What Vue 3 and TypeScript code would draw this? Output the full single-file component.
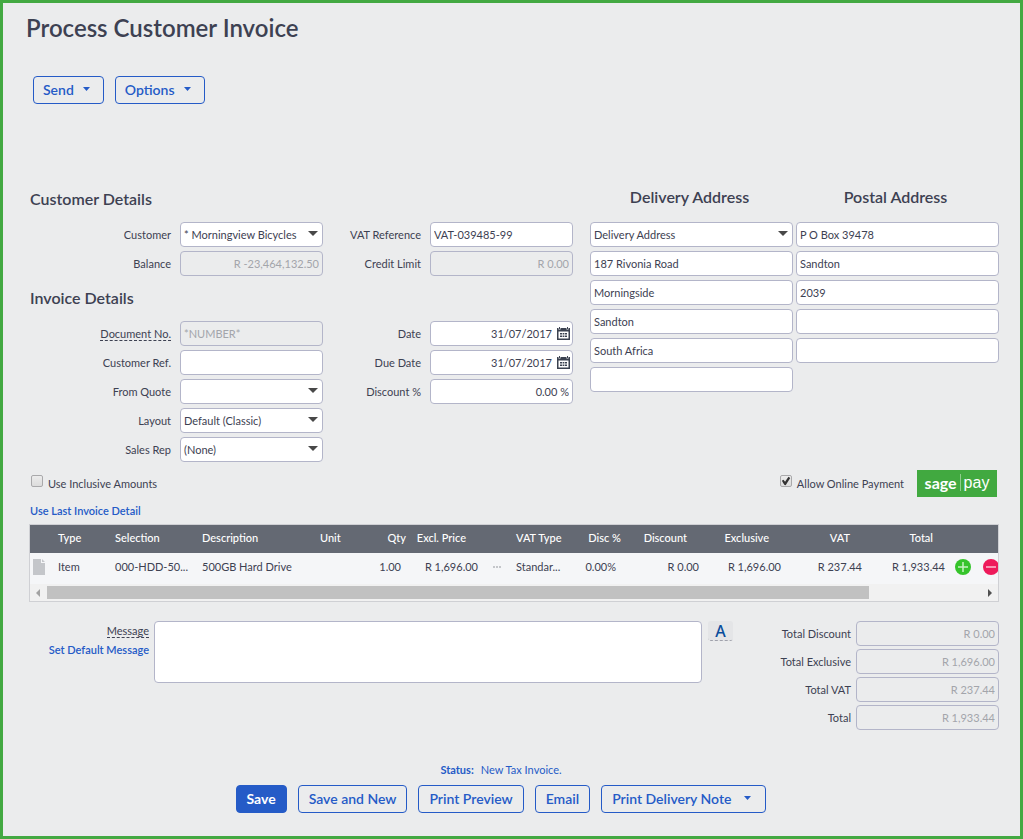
<script setup lang="ts">
import { ref } from 'vue'

interface Field {
  id: string
  label: string
  value: string
  kind?: 'text' | 'select' | 'date'
  readonly?: boolean
  right?: boolean
  hint?: boolean
}

const customerLeft: Field[] = [
  { id: 'customer', label: 'Customer', value: '* Morningview Bicycles', kind: 'select' },
  { id: 'balance', label: 'Balance', value: 'R -23,464,132.50', readonly: true, right: true },
]
const customerRight: Field[] = [
  { id: 'vatref', label: 'VAT Reference', value: 'VAT-039485-99' },
  { id: 'credit', label: 'Credit Limit', value: 'R 0.00', readonly: true, right: true },
]
const invoiceLeft: Field[] = [
  { id: 'docno', label: 'Document No.', value: '*NUMBER*', readonly: true, hint: true },
  { id: 'custref', label: 'Customer Ref.', value: '' },
  { id: 'quote', label: 'From Quote', value: '', kind: 'select' },
  { id: 'layout', label: 'Layout', value: 'Default (Classic)', kind: 'select' },
  { id: 'rep', label: 'Sales Rep', value: '(None)', kind: 'select' },
]
const invoiceRight: Field[] = [
  { id: 'date', label: 'Date', value: '31/07/2017', kind: 'date', right: true },
  { id: 'due', label: 'Due Date', value: '31/07/2017', kind: 'date', right: true },
  { id: 'discount', label: 'Discount %', value: '0.00 %', right: true },
]
const sections = [
  { title: 'Customer Details', columns: [customerLeft, customerRight] },
  { title: 'Invoice Details', columns: [invoiceLeft, invoiceRight] },
]
const deliveryLines = ['187 Rivonia Road', 'Morningside', 'Sandton', 'South Africa', '']
const postalLines = ['P O Box 39478', 'Sandton', '2039', '', '']
const totals: Field[] = [
  { id: 'tdisc', label: 'Total Discount', value: 'R 0.00' },
  { id: 'texcl', label: 'Total Exclusive', value: 'R 1,696.00' },
  { id: 'tvat', label: 'Total VAT', value: 'R 237.44' },
  { id: 'total', label: 'Total', value: 'R 1,933.44' },
]
const inclusive = ref(false)
const online = ref(true)
const message = ref('')
</script>

<template>
  <main class="page">
    <h1>Process Customer Invoice</h1>
    <div class="toolbar">
      <button type="button" class="btn">Send <svg class="caret" viewBox="0 0 7 4"><path d="M0 0h7L3.500 4z" /></svg></button>
      <button type="button" class="btn">Options <svg class="caret" viewBox="0 0 7 4"><path d="M0 0h7L3.500 4z" /></svg></button>
    </div>

    <div class="top">
      <div class="details">
        <section v-for="s in sections" :key="s.title">
          <h2>{{ s.title }}</h2>
          <div class="field-cols">
            <div v-for="(col, i) in s.columns" :key="i" class="stack">
              <div v-for="f in col" :key="f.id" class="field">
                <label :for="f.id"><span :class="{ hint: f.hint }">{{ f.label }}</span></label>
                <div class="control">
                  <template v-if="f.kind === 'select'">
                    <select :id="f.id" class="box"><option>{{ f.value }}</option></select>
                    <svg class="arrow" viewBox="0 0 10 5"><path d="M0 0h10L5 5z" /></svg>
                  </template>
                  <input v-else :id="f.id" type="text" class="box" :class="{ right: f.right, dated: f.kind === 'date' }" :value="f.value" :disabled="f.readonly" />
                  <button v-if="f.kind === 'date'" type="button" class="cal" :aria-label="'Pick ' + f.label">
                    <svg viewBox="0 0 13 13">
                      <path fill="#3b4250" d="M0 1h1.500v1.500h2V1h6v1.500h2V1H13v12H0zM1.500 4.500v7h10v-7z" fill-rule="evenodd" />
                      <path fill="#3b4250" d="M2 0h1v2H2zM10 0h1v2h-1zM3 6h2v1.500H3zM5.600 6h1.800v1.500H5.600zM8 6h2v1.500H8zM3 8.500h2V10H3zM5.600 8.500h1.800V10H5.600zM8 8.500h2V10H8z" />
                    </svg>
                  </button>
                </div>
              </div>
            </div>
          </div>
        </section>
      </div>

      <div class="addresses">
        <section>
          <h2>Delivery Address</h2>
          <div class="stack">
            <div class="select-wrap">
              <select class="box" aria-label="Delivery address"><option>Delivery Address</option></select>
              <svg class="arrow" viewBox="0 0 10 5"><path d="M0 0h10L5 5z" /></svg>
            </div>
            <input v-for="(l, i) in deliveryLines" :key="i" type="text" class="box" :value="l" :aria-label="'Delivery line ' + (i + 1)" />
          </div>
        </section>
        <section>
          <h2>Postal Address</h2>
          <div class="stack">
            <input v-for="(l, i) in postalLines" :key="i" type="text" class="box" :value="l" :aria-label="'Postal line ' + (i + 1)" />
          </div>
        </section>
      </div>
    </div>

    <div class="options">
      <label class="check"><input v-model="inclusive" type="checkbox" />Use Inclusive Amounts</label>
      <div class="online">
        <label class="check"><input v-model="online" type="checkbox" />Allow Online Payment</label>
        <div class="sage"><b>sage</b><i></i><span>pay</span></div>
      </div>
    </div>
    <a href="#" class="link last">Use Last Invoice Detail</a>

    <div class="grid">
      <table>
        <colgroup>
          <col class="w24" /><col class="w57" /><col class="w87" /><col /><col class="w50" /><col class="w44" /><col class="w72" /><col class="w30" /><col class="w65" /><col class="w60" /><col class="w66" /><col class="w82" /><col class="w81" /><col class="w83" /><col class="w28" /><col class="w21" />
        </colgroup>
        <thead>
          <tr>
            <th></th><th>Type</th><th>Selection</th><th>Description</th><th>Unit</th><th class="num qty">Qty</th>
            <th class="num">Excl. Price</th><th></th><th>VAT Type</th><th class="num">Disc %</th><th class="num">Discount</th>
            <th class="num">Exclusive</th><th class="num">VAT</th><th class="num">Total</th><th></th><th></th>
          </tr>
        </thead>
        <tbody>
          <tr>
            <td class="icon"><svg class="doc" viewBox="0 0 12 16"><path d="M0 0h8v4h4v12H0zM9 0l3 3H9z" fill="#c4c6ca" /></svg></td>
            <td>Item</td><td>000-HDD-50...</td><td>500GB Hard Drive</td><td></td><td class="num qty">1.00</td>
            <td class="num">R 1,696.00</td>
            <td class="icon"><svg class="dots" viewBox="0 0 8 2"><path d="M0 0h2v2H0zM3 0h2v2H3zM6 0h2v2H6z" fill="#c4c6ca" /></svg></td>
            <td>Standar...</td><td class="num disc">0.00%</td><td class="num">R 0.00</td><td class="num">R 1,696.00</td>
            <td class="num">R 237.44</td><td class="num">R 1,933.44</td>
            <td class="icon"><button type="button" class="round" aria-label="Add line"><svg viewBox="0 0 16 16"><circle cx="8" cy="8" r="8" fill="#35c42b" /><path d="M8 3v10M3 8h10" stroke="#c7f2c3" stroke-width="1.500" /></svg></button></td>
            <td class="icon remove"><button type="button" class="round" aria-label="Remove line"><svg viewBox="0 0 16 16"><circle cx="8" cy="8" r="8" fill="#ee1a5b" /><path d="M3 8h10" stroke="#fac0d1" stroke-width="1.500" /></svg></button></td>
          </tr>
        </tbody>
      </table>
      <div class="scroll">
        <svg viewBox="0 0 4 8"><path d="M4 0v8L0 4z" fill="#a3a3a3" /></svg>
        <div class="track"><div class="thumb"></div></div>
        <svg viewBox="0 0 4 8"><path d="M0 0v8l4-4z" fill="#505050" /></svg>
      </div>
    </div>

    <div class="bottom">
      <div class="msg-labels">
        <label for="msg" class="hint">Message</label>
        <a href="#" class="link">Set Default Message</a>
      </div>
      <textarea id="msg" v-model="message"></textarea>
      <button type="button" class="spell" aria-label="Text style">A</button>
      <div class="totals">
        <div v-for="t in totals" :key="t.id" class="total">
          <label :for="t.id">{{ t.label }}</label>
          <div class="control"><input :id="t.id" type="text" class="box right" :value="t.value" disabled /></div>
        </div>
      </div>
    </div>

    <p class="status"><b>Status:</b><span>New Tax Invoice.</span></p>
    <div class="actions">
      <button type="button" class="btn primary">Save</button>
      <button type="button" class="btn">Save and New</button>
      <button type="button" class="btn">Print Preview</button>
      <button type="button" class="btn">Email</button>
      <button type="button" class="btn">Print Delivery Note <svg class="caret" viewBox="0 0 7 4"><path d="M0 0h7L3.500 4z" /></svg></button>
    </div>
  </main>
</template>

<style>
body {
  margin: 0;
  background: #ebeced;
}
</style>

<style scoped>
* {
  box-sizing: border-box;
}
.page {
  min-height: 100vh;
  padding: 9px 21px 23px 27px;
  border: 3px solid #43a942;
  background: #ebeced;
  color: #3d4152;
  font: 11px/16px Lato, "Open Sans", sans-serif;
}
button, input, select, textarea {
  margin: 0;
  font: inherit;
  color: inherit;
}
button {
  cursor: pointer;
}
h1 {
  margin: 0 0 0 -4px;
  font-size: 24px;
  line-height: 32px;
  font-weight: 600;
}
h2 {
  margin: 0;
  font-size: 16px;
  line-height: 20px;
  font-weight: 600;
}
.toolbar {
  display: flex;
  gap: 11px;
  margin: 32px 0 0 3px;
}
.btn {
  display: flex;
  align-items: center;
  height: 28px;
  padding: 0 10px;
  border: 1px solid #255bc7;
  border-radius: 4px;
  background: transparent;
  color: #255bc7;
  font-size: 14px;
  font-weight: 600;
  white-space: nowrap;
}
.btn.primary {
  background: #255bc7;
  color: #fff;
  font-weight: 700;
}
.caret {
  width: 7px;
  height: 4px;
  margin: 0 4px 2px 9px;
  fill: #255bc7;
}
.toolbar .btn {
  padding: 0 9px;
}
.top {
  display: grid;
  grid-template-columns: 543fr 409fr;
  column-gap: 17px;
  margin-top: 83px;
}
.details {
  display: flex;
  flex-direction: column;
  gap: 12px;
  padding-top: 2px;
}
.details h2 {
  margin-bottom: 13px;
}
.field-cols {
  display: grid;
  grid-template-columns: 293fr 250fr;
}
.stack {
  display: flex;
  flex-direction: column;
  gap: 4px;
}
.field {
  display: flex;
  align-items: center;
  gap: 9px;
}
.field label {
  flex: 1;
  text-align: right;
}
.hint {
  display: inline-block;
  line-height: 13px;
  border-bottom: 1px dashed #3d4152;
}
.control {
  position: relative;
  width: 143px;
}
.select-wrap {
  position: relative;
}
.box {
  display: block;
  width: 100%;
  height: 25px;
  padding: 0 3px;
  border: 1px solid #b3b5c9;
  border-radius: 4px;
  background: #fff;
  outline: none;
  appearance: none;
}
.box:disabled {
  background: #ebeced;
  color: #a3a5ab;
  opacity: 1;
}
.right {
  text-align: right;
}
.dated {
  padding-right: 20px;
}
.arrow {
  position: absolute;
  top: 9px;
  right: 5px;
  width: 10px;
  height: 5px;
  fill: #484848;
  pointer-events: none;
}
.cal {
  position: absolute;
  top: 6px;
  right: 3px;
  width: 13px;
  height: 13px;
  padding: 0;
  border: 0;
  background: none;
}
.cal svg {
  display: block;
  width: 13px;
  height: 13px;
}
.addresses {
  display: grid;
  grid-template-columns: 1fr 1fr;
  column-gap: 3px;
}
.addresses h2 {
  margin-bottom: 15px;
  padding-right: 4px;
  text-align: center;
}
.options {
  display: flex;
  justify-content: space-between;
  align-items: center;
  margin: 8px 2px 0 1px;
}
.online {
  display: flex;
  align-items: center;
  gap: 13px;
}
.check {
  display: flex;
  align-items: center;
  gap: 5px;
}
.check input {
  width: 12px;
  height: 12px;
  margin-bottom: 5px;
  border: 1px solid #a9a9ab;
  border-radius: 2px;
  background: linear-gradient(#ececec, #dcdcdc);
  appearance: none;
}
.check input:checked::before {
  content: "";
  display: block;
  width: 10px;
  height: 10px;
  background: #333;
  clip-path: polygon(10% 48%, 26% 38%, 42% 58%, 76% 8%, 94% 20%, 48% 92%, 34% 88%);
}
.sage {
  display: flex;
  align-items: center;
  justify-content: center;
  width: 80px;
  height: 27px;
  padding-bottom: 2px;
  background: #41a940;
  color: #fff;
  font: 16px/24px "Liberation Sans", sans-serif;
}
.sage b {
  font: 700 16px/24px Lato, sans-serif;
}
.sage i {
  width: 1px;
  height: 17px;
  margin: 0 3px;
  background: #8fcd8e;
}
.link {
  color: #255bc7;
  font-weight: 600;
  text-decoration: none;
}
.last {
  display: block;
  width: fit-content;
  margin: 6px 0 5px;
}
.grid {
  margin-left: -1px;
  border: 1px solid #cfd0d4;
  background: #f5f6f8;
}
table {
  width: 100%;
  table-layout: fixed;
  border-collapse: collapse;
}
.w21 { width: 21px; }
.w24 { width: 24px; }
.w28 { width: 28px; }
.w30 { width: 30px; }
.w44 { width: 44px; }
.w50 { width: 50px; }
.w57 { width: 57px; }
.w60 { width: 60px; }
.w65 { width: 65px; }
.w66 { width: 66px; }
.w72 { width: 72px; }
.w81 { width: 81px; }
.w82 { width: 82px; }
.w83 { width: 83px; }
.w87 { width: 87px; }
th, td {
  height: 28px;
  padding: 0 4px 2px;
  text-align: left;
  font-weight: 400;
  white-space: nowrap;
}
th {
  background: #646973;
  color: #fff;
  font-weight: 500;
}
td {
  height: 31px;
  padding-bottom: 4px;
}
th.num {
  padding: 0 16px 2px 0;
  text-align: right;
}
td.num {
  text-align: right;
}
th.qty {
  padding-right: 4px;
}
td.qty {
  padding-right: 9px;
}
td.disc {
  padding-right: 21px;
}
.icon {
  padding: 0 0 4px;
  text-align: center;
}
.icon svg {
  display: block;
  margin: 0 auto;
}
.icon .doc {
  width: 12px;
  height: 16px;
  margin-left: 3px;
}
.dots {
  width: 8px;
  height: 2px;
}
.remove {
  overflow: hidden;
}
.round {
  display: block;
  width: 16px;
  height: 16px;
  margin: 0 auto;
  padding: 0;
  border: 0;
  background: none;
}
.remove .round {
  margin-left: 6px;
}
.scroll {
  display: flex;
  align-items: center;
  gap: 7px;
  height: 17px;
  padding: 0 6px;
  background: #f1f1f1;
}
.scroll svg {
  width: 4px;
  height: 8px;
}
.track {
  flex: 1;
}
.thumb {
  width: 88%;
  height: 13px;
  background: #c1c1c1;
}
.bottom {
  display: flex;
  align-items: flex-start;
  margin-top: 19px;
}
.msg-labels {
  display: flex;
  flex-direction: column;
  align-items: flex-end;
  gap: 4px;
  width: 119px;
  padding-top: 3px;
}
textarea {
  flex: 1;
  min-width: 0;
  height: 62px;
  margin: 0 6px 0 5px;
  padding: 3px;
  border: 1px solid #b3b5c9;
  border-radius: 4px;
  background: #fff;
  resize: none;
}
.spell {
  width: 25px;
  height: 20px;
  padding: 0;
  border: 0;
  border-bottom: 1px dashed #a0a2ac;
  border-radius: 3px;
  background: #e4e5e7;
  color: #0a4d9c;
  font: 500 16px/18px "Noto Sans", sans-serif;
}
.totals {
  display: flex;
  flex-direction: column;
  gap: 3px;
  width: 266px;
}
.total {
  display: flex;
  align-items: center;
  justify-content: flex-end;
  gap: 5px;
}
.status {
  display: flex;
  justify-content: center;
  gap: 7px;
  margin: 32px 0 7px;
  padding-right: 27px;
  color: #255bc7;
}
.actions {
  display: flex;
  justify-content: center;
  gap: 11px;
  padding-right: 27px;
}
.actions .caret {
  margin: 0 4px 2px 13px;
}
</style>
